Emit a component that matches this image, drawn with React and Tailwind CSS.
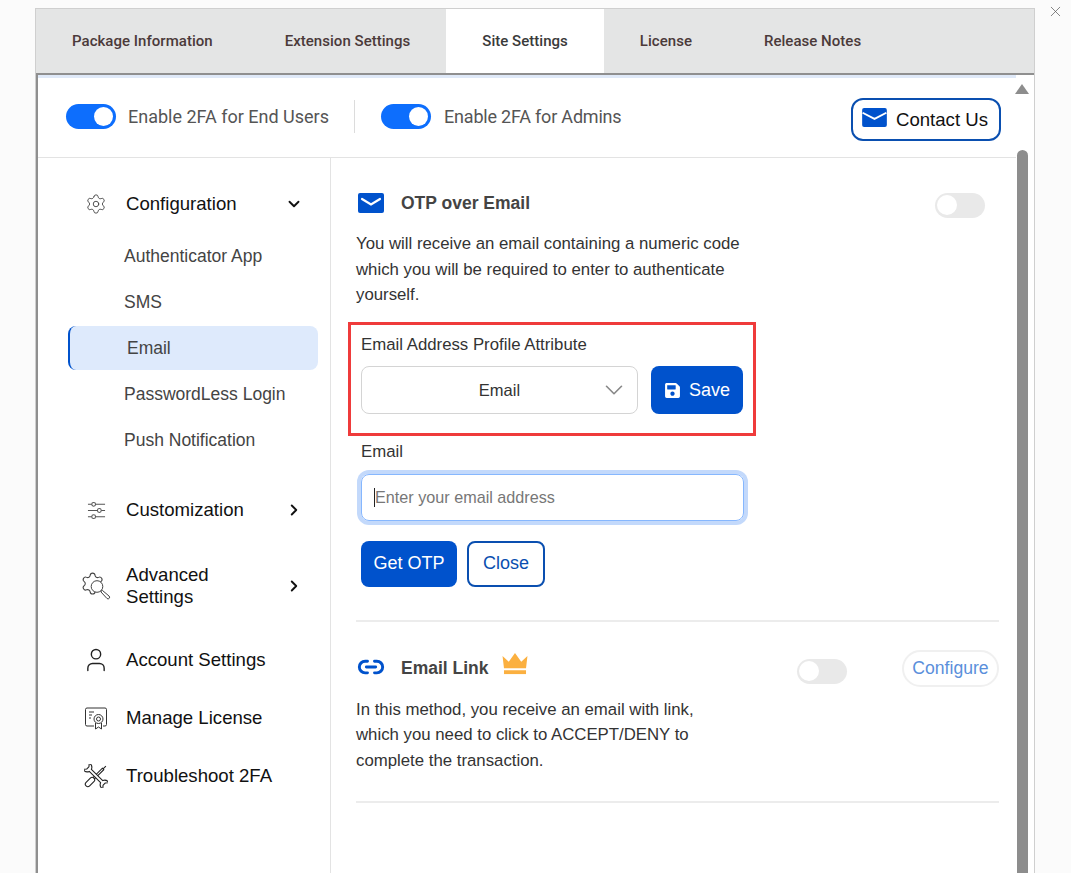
import React from "react";
import { ChevronDown, ChevronRight, Settings, User, Link2, X } from "lucide-react";
import { FaSave } from "react-icons/fa";

const MailIcon = ({ className, inset }) => (
  <svg viewBox="0 0 26 20" className={className}>
    <rect x="0" y="0" width="26" height="20" rx="2" fill="#0052cc" />
    {inset ? (
      <path d="M4 6 L13 11.500 L22 6" fill="none" stroke="#fff" strokeWidth="2.200" strokeLinecap="round" />
    ) : (
      <path d="M0.500 5 L13 11.500 L25.500 5" fill="none" stroke="#fff" strokeWidth="2" />
    )}
  </svg>
);

const Sliders = () => (
  <svg viewBox="0 0 20 20" className="w-[19px] h-[19px]" fill="none" stroke="#555" strokeWidth="1.100">
    <path d="M1 3.500h4M9 3.500h10M1 10h10M15 10h4M1 16.500h4M9 16.500h10" />
    <circle cx="7" cy="3.500" r="2" />
    <circle cx="13" cy="10" r="2" />
    <circle cx="7" cy="16.500" r="2" />
  </svg>
);

const AdvancedIcon = () => (
  <svg viewBox="0 0 30 28" className="w-[30px] h-[28px]" fill="none" stroke="#444" strokeWidth="1">
    <path
      transform="translate(-1 -1) scale(1.050)"
      d="M9.671 4.136a2.34 2.34 0 0 1 4.659 0 2.34 2.34 0 0 0 3.319 1.915 2.34 2.34 0 0 1 2.33 4.033 2.34 2.34 0 0 0 0 3.831 2.34 2.34 0 0 1-2.33 4.033 2.34 2.34 0 0 0-3.319 1.915 2.34 2.34 0 0 1-4.659 0 2.34 2.34 0 0 0-3.32-1.915 2.34 2.34 0 0 1-2.33-4.033 2.34 2.34 0 0 0 0-3.831A2.34 2.34 0 0 1 6.35 6.051a2.34 2.34 0 0 0 3.32-1.915"
    />
    <circle cx="16" cy="14.500" r="5.800" fill="#fff" />
    <path d="M20 19l1.500-.5 6.500 5.500a1.500 1.500 0 0 1-2 2.500l-6-6.500z" fill="#fff" />
  </svg>
);

const LicenseIcon = () => (
  <svg viewBox="0 0 24 24" className="w-6 h-6" fill="none" stroke="#333" strokeWidth="1">
    <path d="M10 20H3a1.500 1.500 0 0 1-1.500-1.500V3.500A1.500 1.500 0 0 1 3 2h18a1.500 1.500 0 0 1 1.500 1.500v15a1.500 1.500 0 0 1-1.500 1.500h-2" />
    <path d="M5 6h5M5 9h3M5 12h2" />
    <circle cx="14.500" cy="13" r="4.500" />
    <circle cx="14.500" cy="13" r="2" />
    <path d="M11.500 17v6l3-2 3 2v-6" />
  </svg>
);

const ToolsIcon = () => (
  <svg viewBox="0 0 24 24" className="w-6 h-6" fill="none" stroke="#222" strokeWidth="1.100">
    <g transform="translate(12 12) rotate(-45)">
      <path d="M14 0L10 0M10 -1L10 1L-3 1L-3 -1L10 -1z" />
      <rect x="-14" y="-2.500" width="11" height="5" rx="2.500" fill="#fff" />
    </g>
    <g transform="translate(12 12) rotate(45)">
      <path
        fill="#fff"
        d="M-8 -1.500L8 -1.500C9 -4 11 -5 14 -4.500L11.500 -1.500L11.500 1.500L14 4.500C11 5 9 4 8 1.500L-8 1.500C-9 4 -11 5 -14 4.500L-11.500 1.500L-11.500 -1.500L-14 -4.500C-11 -5 -9 -4 -8 -1.500Z"
      />
    </g>
  </svg>
);

const Crown = () => (
  <svg viewBox="0 0 28 24" className="w-[30px] h-[23px]" fill="#fbb040">
    <path d="M1 3l6.500 6L14 0l6.500 9L27 3l-1.500 13h-23z" />
    <rect x="2.500" y="18" width="23" height="4" />
  </svg>
);

const Toggle = ({ on, className }) =>
  on ? (
    <span className={"flex items-center justify-end w-[50px] h-[25px] rounded-full bg-[#0d6efd] pr-[3px] shrink-0 " + (className || "")}>
      <span className="w-[19px] h-[19px] rounded-full bg-white" />
    </span>
  ) : (
    <span className={"flex items-center w-[50px] h-[25px] rounded-full bg-[#e9e9e9] pl-[2px] shrink-0 " + (className || "")}>
      <span className="w-[20px] h-[20px] rounded-full bg-white" />
    </span>
  );

const NavRow = ({ icon, label, chev, className }) => (
  <div className={"flex items-center text-[18.6px] leading-[22px] text-[#111] " + (className || "")}>
    <span className="w-[88px] pl-[28px] flex justify-center shrink-0">{icon}</span>
    <span className="w-[159px] shrink-0">{label}</span>
    {chev}
  </div>
);

const Sub = ({ children, active }) =>
  active ? (
    <div className="ml-[30px] w-[250px] h-[44px] my-px flex items-center pl-[57px] bg-[#deeafc] border-l-2 border-[#0052cc] rounded-lg text-[17.5px] text-[#444]">
      {children}
    </div>
  ) : (
    <div className="h-[46px] flex items-center pl-[86px] text-[17.5px] text-[#444]">{children}</div>
  );

const tabs = ["Package Information", "Extension Settings", "Site Settings", "License", "Release Notes"];

export default function App() {
  return (
    <div className="w-[1071px] h-[873px] overflow-hidden bg-[#fbfbfb] relative font-['Liberation_Sans',sans-serif]">
      <X className="absolute left-[1047px] top-[3px] w-[17px] h-[17px] text-[#555]" strokeWidth={1} />
      <div className="ml-[35px] mt-[8px] w-[1000px] border border-[#cfcfcf] bg-white">
        <div className="flex h-[64px] bg-[#e4e5e5] font-['Roboto',sans-serif] font-medium text-[15px] tracking-[0.03px] text-[#4b3a3a]">
          {tabs.map((t, i) => (
            <div key={t} className={"flex items-center px-[36px] " + (i === 2 ? "bg-white text-[#3a3a3a]" : "")}>
              {t}
            </div>
          ))}
        </div>
        <div className="h-[2px] bg-[#8f8f8f]" />
        <div className="flex border-l-2 border-[#8f8f8f] h-[800px]">
          <div className="flex-1 min-w-0">
            <div className="h-[3px] bg-[#dfe9f8]" />
            <div className="h-[80px] flex items-center border-b border-[#e3e3e3] pl-[28px] pb-[2px] font-['Roboto',sans-serif] text-[18px] text-[#555]">
              <Toggle on />
              <span className="ml-[12px]">Enable 2FA for End Users</span>
              <span className="ml-[25px] w-px h-[33px] bg-[#dcdcdc]" />
              <Toggle on className="ml-[26px]" />
              <span className="ml-[13px] tracking-[-0.2px]">Enable 2FA for Admins</span>
              <button className="ml-auto mr-[15px] mt-[6px] flex items-center h-[43px] w-[150px] pl-[9px] border-2 border-[#0a4fb0] rounded-xl text-[#111] font-['Liberation_Sans',sans-serif] text-[18.6px]">
                <MailIcon className="w-[25px] h-[19px] -mt-[4px]" />
                <span className="ml-[9px]">Contact Us</span>
              </button>
            </div>
            <div className="flex">
              <div className="w-[293px] shrink-0 border-r border-[#e3e3e3] h-[720px] pt-[35px]">
                <NavRow
                  icon={<Settings className="w-[22px] h-[22px] text-[#444]" strokeWidth={1} />}
                  label="Configuration"
                  chev={<ChevronDown className="w-[18px] h-[18px] text-[#111]" strokeWidth={2.5} />}
                />
                <div className="mt-[18px]">
                  <Sub>Authenticator App</Sub>
                  <Sub>SMS</Sub>
                  <Sub active>Email</Sub>
                  <Sub>PasswordLess Login</Sub>
                  <Sub>Push Notification</Sub>
                </div>
                <NavRow
                  className="mt-[36px]"
                  icon={<Sliders />}
                  label="Customization"
                  chev={<ChevronRight className="w-[18px] h-[18px] text-[#111]" strokeWidth={2.5} />}
                />
                <NavRow
                  className="mt-[43px]"
                  icon={<AdvancedIcon />}
                  label={<>Advanced<br />Settings</>}
                  chev={<ChevronRight className="w-[18px] h-[18px] text-[#111]" strokeWidth={2.5} />}
                />
                <NavRow className="mt-[38px]" icon={<User className="w-[28px] h-[28px] text-[#222]" strokeWidth={1.2} />} label="Account Settings" />
                <NavRow className="mt-[32px]" icon={<LicenseIcon />} label="Manage License" />
                <NavRow className="mt-[34px]" icon={<ToolsIcon />} label="Troubleshoot 2FA" />
              </div>
              <div className="flex-1 min-w-0 pl-[25px] pr-[17px]">
                <div className="flex items-center pt-[34px] h-[58px]">
                  <MailIcon inset className="w-[26px] h-[20px] ml-[2px] -mt-[2px]" />
                  <span className="ml-[17px] font-bold text-[17.5px] text-[#444] -mt-[2px]">OTP over Email</span>
                  <Toggle className="ml-auto mr-[14px] mt-[2px]" />
                </div>
                <p className="mt-[15px] w-[400px] text-[16.8px] leading-[25.5px] text-[#333]">
                  You will receive an email containing a numeric code which you will be required to enter to authenticate yourself.
                </p>
                <div className="mt-[14px] -ml-[8px] w-[408px] h-[114px] border-[3px] border-[#ef3b3b] pl-[10px] pt-[9px]">
                  <div className="text-[16.8px] leading-[22px] text-[#333]">Email Address Profile Attribute</div>
                  <div className="flex mt-[10px] gap-[13px]">
                    <div className="relative w-[277px] h-[48px] pt-[1px] border border-[#d4d4d4] rounded-lg flex items-center justify-center text-[16.5px] text-[#333]">
                      Email
                      <ChevronDown className="absolute right-[8px] top-[8px] w-[30px] h-[30px] text-[#888]" strokeWidth={1.3} />
                    </div>
                    <button className="w-[92px] h-[48px] pt-[1px] bg-[#0052cc] rounded-lg text-white text-[18px] flex items-center justify-center gap-[8px]">
                      <FaSave className="w-[17px] h-[17px]" />
                      Save
                    </button>
                  </div>
                </div>
                <div className="mt-[5px] ml-[5px] text-[16.8px] leading-[22px] text-[#333]">Email</div>
                <div className="mt-[11px] ml-[5px] w-[383px] h-[47px] border border-[#86b7fe] rounded-lg ring-4 ring-[#c3d9fb] flex items-center pl-[12px] text-[16.2px] text-[#777]">
                  <span className="w-px h-[19px] bg-[#222]" />
                  Enter your email address
                </div>
                <div className="flex mt-[20px] ml-[5px] gap-[10px]">
                  <button className="w-[96px] h-[46px] bg-[#0052cc] rounded-lg text-white text-[18px]">Get OTP</button>
                  <button className="w-[78px] h-[46px] border-2 border-[#0a4fb0] rounded-lg text-[#0a4fb0] text-[18px]">Close</button>
                </div>
                <div className="mt-[33px] h-[2px] bg-[#ececec]" />
                <div className="flex items-center mt-[28px] h-[37px]">
                  <Link2 className="w-[28px] h-[28px] ml-[1px] text-[#0052cc] -mt-[2px]" strokeWidth={2.5} />
                  <span className="ml-[16px] font-bold text-[17.5px] text-[#444]">Email Link</span>
                  <span className="ml-[11px] -mt-[7px]"><Crown /></span>
                  <Toggle className="ml-[267px] mt-[6px]" />
                  <button className="ml-auto w-[97px] h-[37px] rounded-full border-2 border-[#f0f0f0] text-[17.6px] text-[#5a8fdb]">Configure</button>
                </div>
                <p className="mt-[10px] w-[360px] text-[16.8px] leading-[25.5px] text-[#333]">
                  In this method, you receive an email with link, which you need to click to ACCEPT/DENY to complete the transaction.
                </p>
                <div className="mt-[28px] h-[2px] bg-[#ececec]" />
              </div>
            </div>
          </div>
          <div className="w-[18px] shrink-0 flex flex-col items-center pr-[6px]">
            <span className="mt-[9px] w-0 h-0 border-x-[7px] border-x-transparent border-b-[10px] border-b-[#8d8d8d]" />
            <span className="mt-[56px] w-[11px] flex-1 rounded-t-full bg-[#8d8d8d]" />
          </div>
        </div>
      </div>
    </div>
  );
}
